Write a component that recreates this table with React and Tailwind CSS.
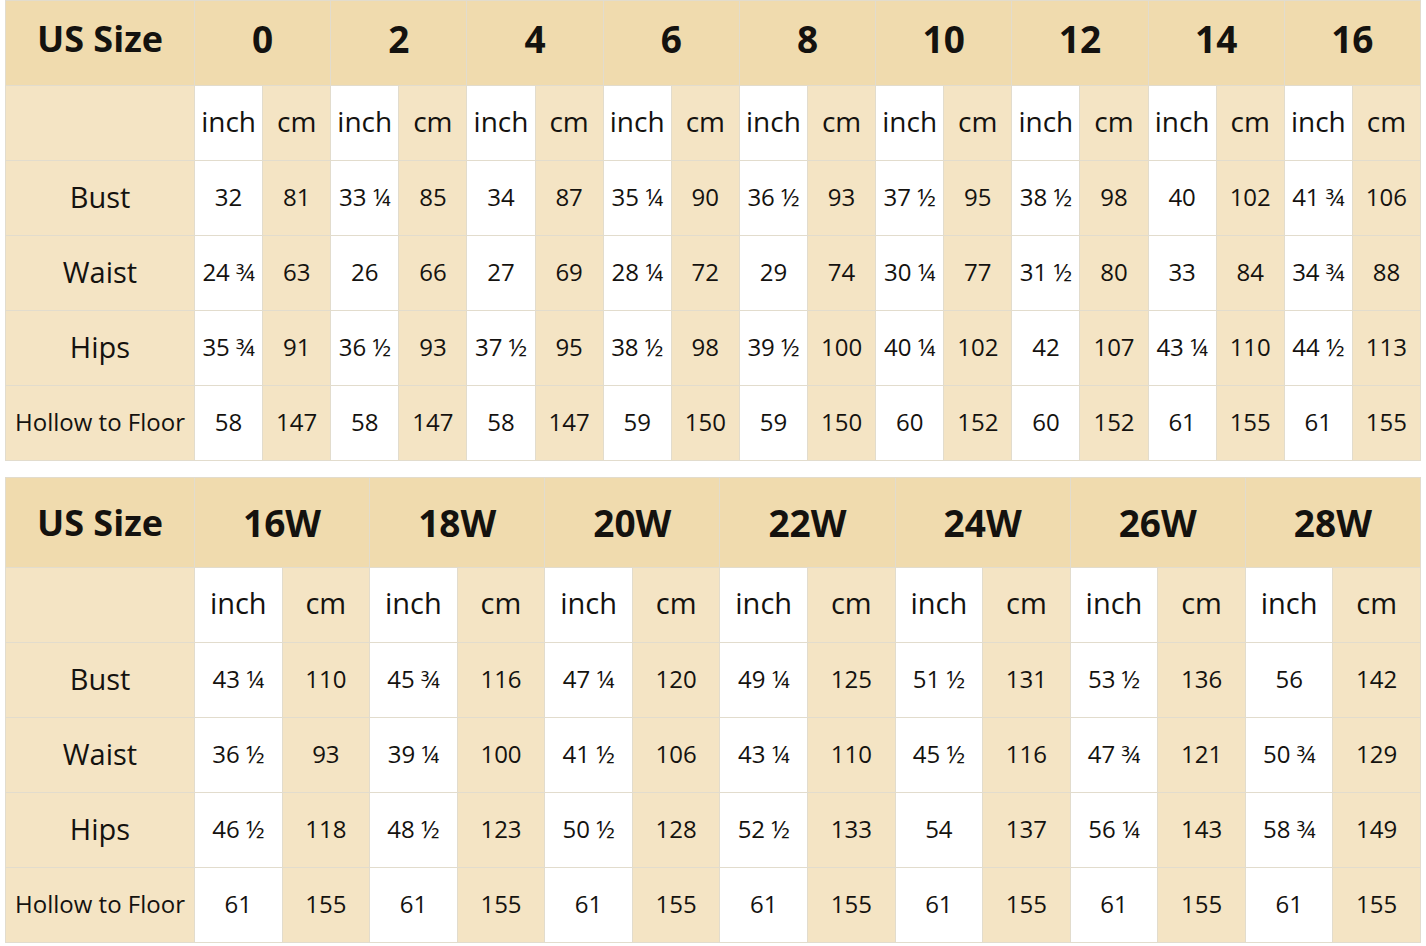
const top = {
  sizes: ['0', '2', '4', '6', '8', '10', '12', '14', '16'],
  rows: [
    ['Bust', ['32', '81', '33 ¼', '85', '34', '87', '35 ¼', '90', '36 ½', '93', '37 ½', '95', '38 ½', '98', '40', '102', '41 ¾', '106']],
    ['Waist', ['24 ¾', '63', '26', '66', '27', '69', '28 ¼', '72', '29', '74', '30 ¼', '77', '31 ½', '80', '33', '84', '34 ¾', '88']],
    ['Hips', ['35 ¾', '91', '36 ½', '93', '37 ½', '95', '38 ½', '98', '39 ½', '100', '40 ¼', '102', '42', '107', '43 ¼', '110', '44 ½', '113']],
    ['Hollow to Floor', ['58', '147', '58', '147', '58', '147', '59', '150', '59', '150', '60', '152', '60', '152', '61', '155', '61', '155']],
  ],
};

const bottom = {
  sizes: ['16W', '18W', '20W', '22W', '24W', '26W', '28W'],
  rows: [
    ['Bust', ['43 ¼', '110', '45 ¾', '116', '47 ¼', '120', '49 ¼', '125', '51 ½', '131', '53 ½', '136', '56', '142']],
    ['Waist', ['36 ½', '93', '39 ¼', '100', '41 ½', '106', '43 ¼', '110', '45 ½', '116', '47 ¾', '121', '50 ¾', '129']],
    ['Hips', ['46 ½', '118', '48 ½', '123', '50 ½', '128', '52 ½', '133', '54', '137', '56 ¼', '143', '58 ¾', '149']],
    ['Hollow to Floor', ['61', '155', '61', '155', '61', '155', '61', '155', '61', '155', '61', '155', '61', '155']],
  ],
};

function SizeTable({ data, cols, headerH, unitSize }) {
  const n = data.sizes.length * 2;
  return (
    <div className={`grid gap-px bg-[#e2dccd] border border-[#e2dccd] ${cols}`}>
      <div className={`bg-[#f0dbae] flex items-center justify-center text-[36px] font-bold ${headerH}`}>US Size</div>
      {data.sizes.map((s) => (
        <div key={s} className={`col-span-2 bg-[#f0dbae] flex items-center justify-center text-[37px] font-bold ${headerH}`}>
          {s}
        </div>
      ))}

      <div className="bg-[#f4e4c4] h-[74px]" />
      {Array.from({ length: n }).map((_, i) => (
        <div
          key={i}
          className={`flex items-center justify-center pb-[4px] ${unitSize} ${i % 2 === 0 ? 'bg-white' : 'bg-[#f4e4c4]'}`}
        >
          {i % 2 === 0 ? 'inch' : 'cm'}
        </div>
      ))}

      {data.rows.map(([label, vals]) => (
        <div key={label} className="contents">
          <div
            className={`bg-[#f4e4c4] h-[74px] flex items-center justify-center pb-[3px] ${
              label.length > 6 ? 'text-[24px]' : 'text-[29px]'
            }`}
          >
            {label}
          </div>
          {vals.map((v, i) => (
            <div
              key={i}
              className={`flex items-center justify-center pb-[3px] text-[24px] whitespace-nowrap ${
                i % 2 === 0 ? 'bg-white' : 'bg-[#f4e4c4]'
              }`}
            >
              {v}
            </div>
          ))}
        </div>
      ))}
    </div>
  );
}

export default function App() {
  return (
    <div
      className="w-[1426px] h-[946px] bg-white px-[5px] text-[#14120f] overflow-hidden"
      style={{ fontFamily: '"Open Sans", "Noto Sans", sans-serif' }}
    >
      <SizeTable
        data={top}
        cols="grid-cols-[188px_repeat(18,minmax(0,1fr))]"
        headerH="h-[84px] pb-[8px]"
        unitSize="text-[28px]"
      />
      <div className="h-[16px]" />
      <SizeTable
        data={bottom}
        cols="grid-cols-[188px_repeat(14,minmax(0,1fr))]"
        headerH="h-[89px]"
        unitSize="text-[29px]"
      />
    </div>
  );
}
